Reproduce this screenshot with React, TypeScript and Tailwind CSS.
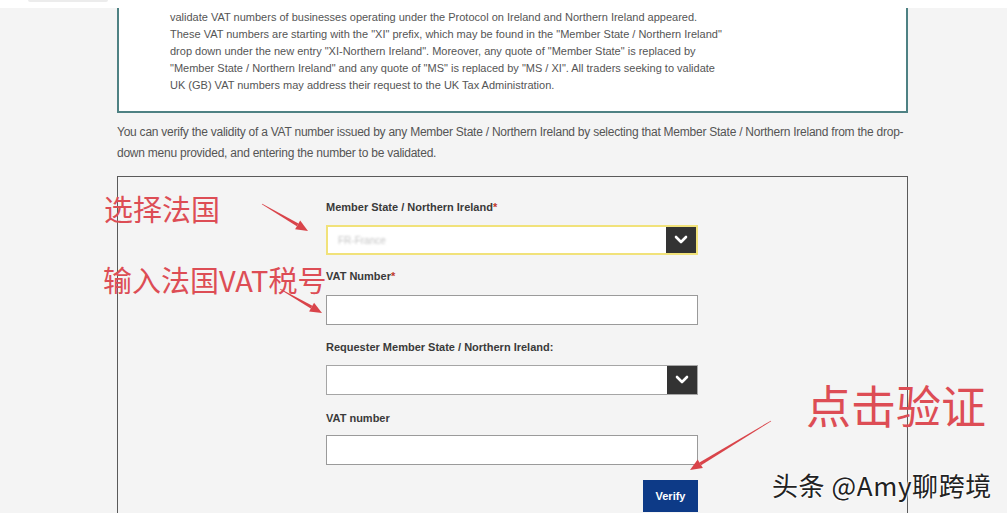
import React from "react";

const Chevron = () => (
  <svg width="14" height="10" viewBox="0 0 14 10">
    <polyline points="2,2 7,7 12,2" fill="none" stroke="#fff" strokeWidth="2.6" strokeLinecap="round" strokeLinejoin="round" />
  </svg>
);

function Arrow({ x1, y1, x2, y2 }: { x1: number; y1: number; x2: number; y2: number }) {
  const dx = x2 - x1;
  const dy = y2 - y1;
  const len = Math.sqrt(dx * dx + dy * dy);
  const ux = dx / len;
  const uy = dy / len;
  const px = -uy;
  const py = ux;
  const headLen = 12;
  const headW = 5;
  const bx = x2 - ux * headLen;
  const by = y2 - uy * headLen;
  const body = [
    [x1 + px * 0.4, y1 + py * 0.4],
    [bx + px * 1.6, by + py * 1.6],
    [bx - px * 1.6, by - py * 1.6],
    [x1 - px * 0.4, y1 - py * 0.4],
  ]
    .map((p) => p.join(","))
    .join(" ");
  const head = [
    [x2, y2],
    [bx + px * headW, by + py * headW],
    [bx - px * headW, by - py * headW],
  ]
    .map((p) => p.join(","))
    .join(" ");
  return (
    <g fill="#d9444a">
      <polygon points={body} />
      <polygon points={head} />
    </g>
  );
}

export default function App() {
  const font = { fontFamily: '"Liberation Sans", Arial, sans-serif' };
  return (
    <div className="relative w-[1007px] h-[513px] overflow-hidden bg-[#f4f4f4]" style={font}>
      {/* top strip */}
      <div className="h-[8px] bg-white relative">
        <div className="absolute left-[28px] top-0 w-[80px] h-[2px] rounded-b bg-[#ececec]" />
      </div>

      <div className="ml-[117px] w-[791px]">
        {/* notice box */}
        <div className="bg-white border-l-2 border-r-2 border-b-2 border-[#4e8183] pl-[51px] pr-4 pt-[1px] pb-[17px] text-[11px] leading-[17px] text-[#555]">
          <p>validate VAT numbers of businesses operating under the Protocol on Ireland and Northern Ireland appeared.</p>
          <p>These VAT numbers are starting with the "XI" prefix, which may be found in the "Member State / Northern Ireland"</p>
          <p>drop down under the new entry "XI-Northern Ireland". Moreover, any quote of "Member State" is replaced by</p>
          <p>"Member State / Northern Ireland" and any quote of "MS" is replaced by "MS / XI". All traders seeking to validate</p>
          <p>UK (GB) VAT numbers may address their request to the UK Tax Administration.</p>
        </div>

        {/* paragraph */}
        <p className="mt-[9px] text-[12px] leading-[21px] text-[#555] tracking-[-0.24px]">
          You can verify the validity of a VAT number issued by any Member State / Northern Ireland by selecting that Member State / Northern Ireland from the drop-
          <br />
          down menu provided, and entering the number to be validated.
        </p>

        {/* form box */}
        <div className="mt-[12px] border border-[#5a5a5a] h-[400px] pl-[208px] pt-[23px]">
          <div className="w-[372px] flex flex-col">
            <label className="text-[11px] leading-[14px] font-bold text-[#3a3a3a] mb-[11px]">
              Member State / Northern Ireland<span className="text-[#c0392b]">*</span>
            </label>
            <div className="h-[30px] flex border-2 border-[#f1e27a] bg-white">
              <div className="flex-1 flex items-center pl-[10px] text-[10px] text-[#c4c4c4] blur-[1px]">FR-France</div>
              <div className="w-[30px] bg-[#333] flex items-center justify-center">
                <Chevron />
              </div>
            </div>

            <label className="mt-[14px] text-[11px] leading-[14px] font-bold text-[#3a3a3a] mb-[12px]">
              VAT Number<span className="text-[#c0392b]">*</span>
            </label>
            <div className="h-[30px] border border-[#9a9a9a] bg-white" />

            <label className="mt-[15px] text-[11px] leading-[14px] font-bold text-[#3a3a3a] mb-[11px]">
              Requester Member State / Northern Ireland:
            </label>
            <div className="h-[30px] flex border border-[#a5a5a5] bg-white">
              <div className="flex-1" />
              <div className="w-[30px] bg-[#333] flex items-center justify-center">
                <Chevron />
              </div>
            </div>

            <label className="mt-[16px] text-[11px] leading-[14px] font-bold text-[#3a3a3a] mb-[10px]">VAT number</label>
            <div className="h-[30px] border border-[#9a9a9a] bg-white" />

            <div className="mt-[15px] flex justify-end">
              <button className="w-[55px] h-[32px] bg-[#0d3a87] text-white text-[11px] font-bold">Verify</button>
            </div>
          </div>
        </div>
      </div>

      {/* annotations */}
      <div
        className="absolute left-[104px] top-[190px] text-[29px] leading-[36px] text-[#dd4d55]"
        style={{ fontFamily: '"Noto Sans CJK SC", sans-serif' }}
      >
        选择法国
      </div>
      <div
        className="absolute left-[103px] top-[261px] text-[29px] leading-[36px] text-[#dd4d55]"
        style={{ fontFamily: '"Noto Sans CJK SC", sans-serif' }}
      >
        输入法国VAT税号
      </div>
      <div
        className="absolute left-[806px] top-[377px] text-[45px] leading-[56px] text-[#dd4d55]"
        style={{ fontFamily: '"Noto Sans CJK SC", sans-serif' }}
      >
        点击验证
      </div>
      <svg className="absolute left-0 top-0 pointer-events-none" width="1007" height="513">
        <Arrow x1={262} y1={204} x2={308} y2={231} />
        <Arrow x1={280} y1={289} x2={322} y2={313} />
        <Arrow x1={771} y1={421} x2={690} y2={470} />
      </svg>
      <div
        className="absolute left-[772px] top-[469px] text-[26px] leading-[32px] text-[#222] tracking-[0.6px]"
        style={{
          fontFamily: '"Noto Sans CJK SC", sans-serif',
          textShadow: "0 0 2px #fff, 0 0 2px #fff, 0 0 3px #fff",
        }}
      >
        头条 @Amy聊跨境
      </div>
    </div>
  );
}
